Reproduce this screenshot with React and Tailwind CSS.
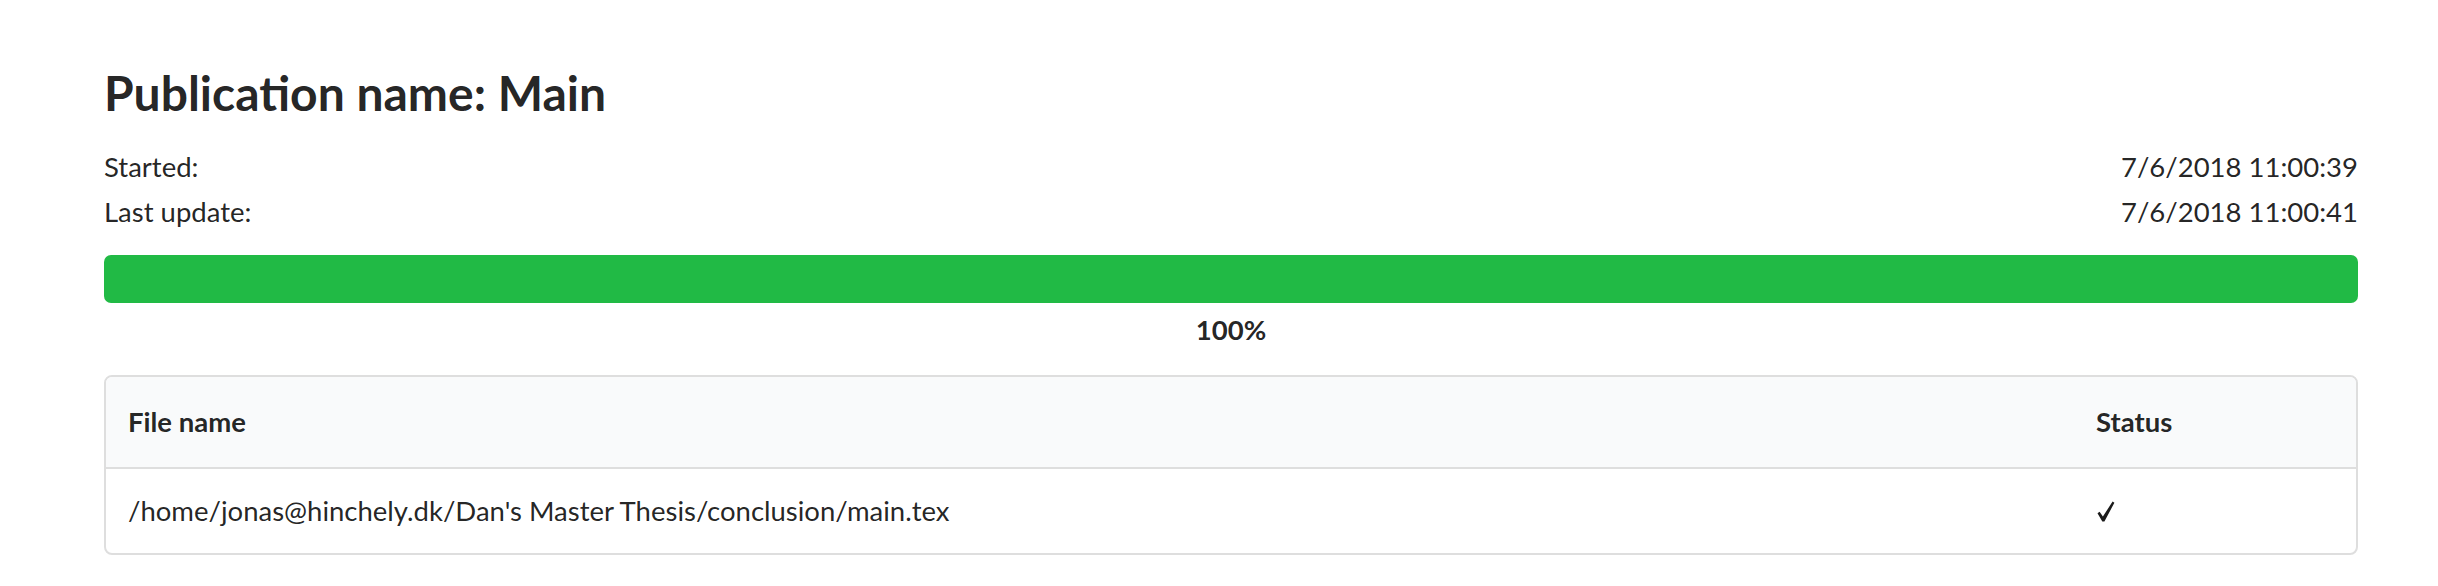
export default function App() {
	const font = { fontFamily: 'Lato, "Noto Sans", sans-serif' };

	return (
		<div className="min-h-screen bg-white text-[rgba(0,0,0,0.87)]" style={font}>
			<div className="w-[2254px] ml-[104px] pt-[63px]">
				<h3 className="text-[48px] leading-[59px] font-bold">Publication name: Main</h3>

				<div className="mt-[22px] text-[27.5px] leading-[45px]">
					<div className="flex justify-between">
						<span>Started:</span>
						<span>7/6/2018 11:00:39</span>
					</div>
					<div className="flex justify-between">
						<span>Last update:</span>
						<span>7/6/2018 11:00:41</span>
					</div>
				</div>

				<div className="mt-[21px] h-[48px] rounded-[7px] bg-[#21ba45]" />
				<div className="mt-[4px] text-center text-[27.5px] leading-[45px] font-bold">100%</div>

				<div className="mt-[23px] border-2 border-[#dedede] rounded-[8px] overflow-hidden text-[27.5px]">
					<div className="grid grid-cols-[1fr_282px] h-[92px] items-center bg-[#f9fafb] font-bold border-b-2 border-[#dedede]">
						<div className="pl-[22px]">File name</div>
						<div className="pl-[22px]">Status</div>
					</div>
					<div className="grid grid-cols-[1fr_282px] h-[84px] items-center">
						<div className="pl-[22px]">/home/jonas@hinchely.dk/Dan's Master Thesis/conclusion/main.tex</div>
						<div className="pl-[23px] flex items-center">
							{/* check mark */}
							<svg width="18" height="21" viewBox="0 0 18 21" className="mt-[1px]">
								<path d="M0.5 12.2 L2.6 10.8 L5.9 15.4 L15.6 0.6 L17.4 1.8 L7.4 20.4 L5.3 20.4 Z" fill="#1b1b1b" />
							</svg>
						</div>
					</div>
				</div>
			</div>
		</div>
	);
}
